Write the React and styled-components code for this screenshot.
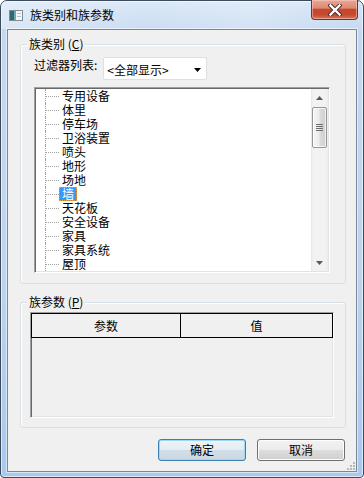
import React from 'react'
import styled, { createGlobalStyle } from 'styled-components';

const GlobalStyle = createGlobalStyle`
  html, body {
    margin: 0;
    padding: 0;
    background: #ffffff;
  }
  body {
    font-family: "Noto Sans CJK SC", "Liberation Sans", sans-serif;
    font-size: 12px;
    color: #000;
  }
  * {
    box-sizing: border-box;
  }
`;

const Window = styled.div`
  width: 364px;
  height: 478px;
  border: 1px solid #3d4a5c;
  border-radius: 7px 7px 4px 4px;
  background: linear-gradient(to bottom, #d6e5f6 0px, #c4d9f1 30px, #bed5ef 55%, #a8c8ee 100%);
  box-shadow: inset 0 0 0 1px rgba(255, 255, 255, 0.6);
  display: flex;
  flex-direction: column;
`;

const TitleBar = styled.div`
  height: 28px;
  display: flex;
  align-items: flex-start;
  padding-left: 8px;
  background: linear-gradient(to right, rgba(255,255,255,0.35), rgba(255,255,255,0.1) 40%, rgba(255,255,255,0.25) 70%, rgba(255,255,255,0));
  border-radius: 6px 6px 0 0;
`;

const TitleIcon = styled.svg`
  margin-top: 9px;
  flex: none;
`;

const TitleText = styled.div`
  margin-left: 7px;
  margin-top: 6px;
  line-height: 16px;
  font-size: 12px;
  color: #000;
`;

const CloseButton = styled.div`
  margin-left: auto;
  margin-top: -1px;
  margin-right: 5px;
  width: 47px;
  height: 20px;
  border: 1px solid #6b362c;
  border-top: none;
  border-radius: 0 0 4px 4px;
  background: linear-gradient(to bottom, #e9a796 0%, #dc8a74 42%, #c8472d 50%, #c44a2f 78%, #d9795c 100%);
  box-shadow: inset 0 0 0 1px rgba(255, 220, 210, 0.45);
  display: flex;
  align-items: center;
  justify-content: center;
`;

const Client = styled.div`
  flex: 1;
  margin: 0 6px 5px 6px;
  border: 1px solid #7b8797;
  box-shadow: 0 0 0 1px rgba(255, 255, 255, 0.55);
  background: #f0f0f0;
  position: relative;
  display: flex;
  flex-direction: column;
  padding: 7px 10px 0 12px;
`;

const Group = styled.fieldset`
  margin: ${p => p.$top}px 0 0 0;
  padding: 0;
  border: 1px solid #d5dfe5;
  border-radius: 3px;
  box-shadow: inset 1px 1px 0 #ffffff;
  min-width: 0;
`;

const GroupBody = styled.div`
  display: flex;
  flex-direction: column;
  padding: 0 ${p => p.$right}px ${p => p.$bottom}px ${p => p.$left}px;
`;

const Legend = styled.legend`
  margin-left: 6px;
  padding: 0 2px;
  line-height: 14px;
  font-size: 12px;
  background: #f0f0f0;
`;

const Key = styled.span`
  text-decoration: underline;
`;

const FilterRow = styled.div`
  margin-top: 6px;
  height: 23px;
  display: flex;
  align-items: flex-start;
  gap: 6px;
`;

const FilterLabel = styled.div`
  margin-top: 1px;
  line-height: 14px;
`;

const Combo = styled.div`
  width: 104px;
  height: 23px;
  background: #ffffff;
  border: 1px solid #dcdfe3;
  border-radius: 2px;
  display: flex;
  align-items: flex-start;
  padding: 5px 5px 0 3px;
  line-height: 14px;
`;

const ComboText = styled.div`
  flex: 1;
`;

const ComboArrow = styled.svg`
  margin-top: 5px;
`;

const ListBox = styled.div`
  margin-top: 7px;
  height: 186px;
  display: flex;
  background: #ffffff;
  border-top: 1px solid #a0a0a0;
  border-left: 1px solid #a0a0a0;
  border-right: 1px solid #ffffff;
  border-bottom: 1px solid #ffffff;
  box-shadow: inset 1px 1px 0 #696969, inset -1px -1px 0 #e3e3e3;
  padding: 1px;
`;

const Tree = styled.div`
  flex: 1;
  overflow: hidden;
  display: flex;
  flex-direction: column;
`;

const TreeRow = styled.div`
  height: 14px;
  display: flex;
  flex: none;
`;

const Connector = styled.div`
  margin-left: 9px;
  width: 14px;
  height: 14px;
  border-left: 1px dotted #a0a0a0;
  display: flex;
  align-items: center;
`;

const Dash = styled.div`
  flex: 1;
  border-top: 1px dotted #a0a0a0;
  margin-top: 1px;
`;

const ItemLabel = styled.div`
  height: 14px;
  line-height: 14px;
  padding: 0 3px;
  white-space: nowrap;
  background: ${p => (p.$selected ? '#3399ff' : 'transparent')};
  color: ${p => (p.$selected ? '#ffffff' : '#000000')};
  outline: ${p => (p.$selected ? '1px dotted #e8a040' : 'none')};
  outline-offset: -1px;
`;

const ScrollBar = styled.div`
  width: 17px;
  display: flex;
  flex-direction: column;
  background: linear-gradient(to right, #e6e6e6 0px, #f2f2f2 2px, #f2f2f2 14px, #ececec 17px);
`;

const ScrollArrow = styled.div`
  height: 17px;
  display: flex;
  align-items: center;
  justify-content: center;
  flex: none;
`;

const Thumb = styled.div`
  margin: 1px 1px 0 1px;
  height: 41px;
  border: 1px solid #979797;
  border-radius: 2px;
  background: linear-gradient(to right, #f5f5f5 0%, #ececec 45%, #dadada 55%, #d0d0d0 100%);
  box-shadow: inset 0 0 0 1px rgba(255, 255, 255, 0.7);
  display: flex;
  align-items: center;
  justify-content: center;
  flex: none;
`;

const TrackFill = styled.div`
  flex: 1;
`;

const ParamTable = styled.div`
  margin-top: 3px;
  height: 106px;
  background: #f0f0f0;
  border-top: 1px solid #a0a0a0;
  border-left: 1px solid #a0a0a0;
  border-right: 1px solid #ffffff;
  border-bottom: 1px solid #ffffff;
  box-shadow: inset 1px 1px 0 #696969, inset -1px -1px 0 #e3e3e3;
  display: flex;
  flex-direction: column;
`;

const HeaderRow = styled.div`
  height: 25px;
  display: flex;
  border: 1px solid #000000;
  background: #f0f0f0;
`;

const HeaderCell = styled.div`
  width: ${p => (p.$width ? `${p.$width}px` : 'auto')};
  flex: ${p => (p.$width ? 'none' : '1')};
  border-right: ${p => (p.$divider ? '1px solid #000000' : 'none')};
  display: flex;
  align-items: center;
  justify-content: center;
  line-height: 14px;
`;

const ButtonRow = styled.div`
  margin-top: 11px;
  display: flex;
  justify-content: flex-end;
  gap: 11px;
  padding-right: 1px;
`;

const Button = styled.div`
  width: 88px;
  height: 22px;
  border-radius: 3px;
  border: 1px solid ${p => (p.$default ? '#3c7fb1' : '#707070')};
  background: ${p =>
    p.$default
      ? 'linear-gradient(to bottom, #eef4f8 0%, #e3ecf2 50%, #d3dfe8 51%, #c9d7e2 100%)'
      : 'linear-gradient(to bottom, #f2f2f2 0%, #ebebeb 50%, #dddddd 51%, #cfcfcf 100%)'};
  box-shadow: ${p => (p.$default ? 'inset 0 0 0 1px #9fd7f5' : 'inset 0 0 0 1px #fcfcfc')};
  display: flex;
  align-items: center;
  justify-content: center;
  line-height: 14px;
`;

const SizeGrip = styled.svg`
  position: absolute;
  right: 1px;
  bottom: 1px;
`;

const categories = [
  '专用设备',
  '体里',
  '停车场',
  '卫浴装置',
  '喷头',
  '地形',
  '场地',
  '墙',
  '天花板',
  '安全设备',
  '家具',
  '家具系统',
  '屋顶',
];

function App() {
  return (
    <>
      <GlobalStyle />
      <Window>
        <TitleBar>
          <TitleIcon width="14" height="11" viewBox="0 0 14 11">
            <rect x="0.5" y="0.5" width="13" height="10" fill="#f4f6f8" stroke="#7f8b98" />
            <rect x="1" y="1" width="4" height="9" fill="#2f6a6e" />
            <rect x="5" y="1" width="2" height="9" fill="#6aaab6" />
            <rect x="8" y="3" width="4" height="1" fill="#b8c2cc" />
            <rect x="8" y="6" width="4" height="1" fill="#b8c2cc" />
          </TitleIcon>
          <TitleText>族类别和族参数</TitleText>
          <CloseButton>
            <svg width="14" height="12" viewBox="0 0 14 12">
              <path d="M2.5 1.5 L11.5 10.5 M11.5 1.5 L2.5 10.5" stroke="#4a2a24" strokeWidth="4.2" strokeLinecap="square" />
              <path d="M2.5 1.5 L11.5 10.5 M11.5 1.5 L2.5 10.5" stroke="#ffffff" strokeWidth="2.4" strokeLinecap="square" />
            </svg>
          </CloseButton>
        </TitleBar>
        <Client>
          <Group $top={0}>
            <Legend>族类别 (<Key>C</Key>)</Legend>
            <GroupBody $left={13} $right={15} $bottom={10}>
              <FilterRow>
                <FilterLabel>过滤器列表:</FilterLabel>
                <Combo>
                  <ComboText>&lt;全部显示&gt;</ComboText>
                  <ComboArrow width="7" height="4" viewBox="0 0 7 4">
                    <path d="M0 0 H7 L3.5 4 Z" fill="#000" />
                  </ComboArrow>
                </Combo>
              </FilterRow>
              <ListBox>
                <Tree>
                  {categories.map(name => (
                    <TreeRow key={name}>
                      <Connector>
                        <Dash />
                      </Connector>
                      <ItemLabel $selected={name === '墙'}>{name}</ItemLabel>
                    </TreeRow>
                  ))}
                </Tree>
                <ScrollBar>
                  <ScrollArrow>
                    <svg width="7" height="4" viewBox="0 0 7 4">
                      <path d="M3.5 0 L7 4 H0 Z" fill="#5a5a5a" />
                    </svg>
                  </ScrollArrow>
                  <Thumb>
                    <svg width="7" height="8" viewBox="0 0 7 8">
                      <rect x="0" y="0" width="7" height="1" fill="#6e6e6e" />
                      <rect x="0" y="2" width="7" height="1" fill="#6e6e6e" />
                      <rect x="0" y="4" width="7" height="1" fill="#6e6e6e" />
                      <rect x="0" y="6" width="7" height="1" fill="#6e6e6e" />
                    </svg>
                  </Thumb>
                  <TrackFill />
                  <ScrollArrow>
                    <svg width="7" height="4" viewBox="0 0 7 4">
                      <path d="M0 0 H7 L3.5 4 Z" fill="#5a5a5a" />
                    </svg>
                  </ScrollArrow>
                </ScrollBar>
              </ListBox>
            </GroupBody>
          </Group>
          <Group $top={11}>
            <Legend>族参数 (<Key>P</Key>)</Legend>
            <GroupBody $left={9} $right={11} $bottom={9}>
              <ParamTable>
                <HeaderRow>
                  <HeaderCell $width={149} $divider>参数</HeaderCell>
                  <HeaderCell>值</HeaderCell>
                </HeaderRow>
              </ParamTable>
            </GroupBody>
          </Group>
          <ButtonRow>
            <Button $default>确定</Button>
            <Button>取消</Button>
          </ButtonRow>
          <SizeGrip width="8" height="8" viewBox="0 0 8 8">
            <rect x="6" y="0" width="2" height="2" fill="#b8b8b8" />
            <rect x="3" y="3" width="2" height="2" fill="#b8b8b8" />
            <rect x="6" y="3" width="2" height="2" fill="#b8b8b8" />
            <rect x="0" y="6" width="2" height="2" fill="#b8b8b8" />
            <rect x="3" y="6" width="2" height="2" fill="#b8b8b8" />
            <rect x="6" y="6" width="2" height="2" fill="#b8b8b8" />
          </SizeGrip>
        </Client>
      </Window>
    </>
  );
}

export default App
